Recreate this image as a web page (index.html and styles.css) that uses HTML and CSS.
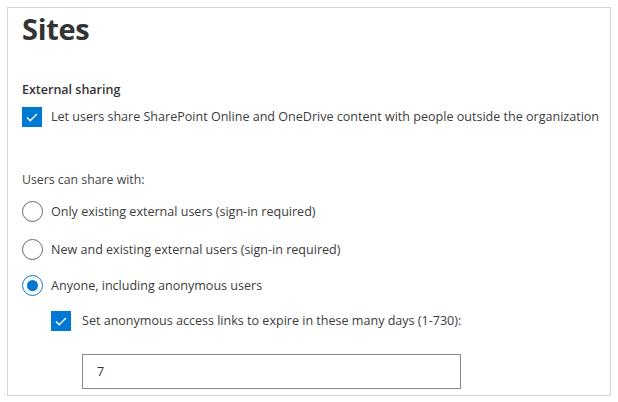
FILE: index.html
```html
<!DOCTYPE html>
<html>
<head>
<meta charset="utf-8">
<link rel="stylesheet" href="styles.css">
</head>
<body>
<div class="panel">
  <h1 class="title">Sites</h1>
  <div class="section-label">External sharing</div>
  <label class="check-row">
    <span class="checkbox"><svg viewBox="0 0 20 20" width="20" height="20"><path d="M5 10.5l3.2 3.2L15 7" fill="none" stroke="#fff" stroke-width="1.4"/></svg></span>
    <span class="text">Let users share SharePoint Online and OneDrive content with people outside the organization</span>
  </label>
  <div class="group-label">Users can share with:</div>
  <div class="radio-row first"><span class="radio"></span><span class="text">Only existing external users (sign-in required)</span></div>
  <div class="radio-row second"><span class="radio"></span><span class="text">New and existing external users (sign-in required)</span></div>
  <div class="radio-row third"><span class="radio on"></span><span class="text">Anyone, including anonymous users</span></div>
  <div class="sub">
    <label class="check-row">
      <span class="checkbox"><svg viewBox="0 0 20 20" width="20" height="20"><path d="M5 10.5l3.2 3.2L15 7" fill="none" stroke="#fff" stroke-width="1.4"/></svg></span>
      <span class="text">Set anonymous access links to expire in these many days (1-730):</span>
    </label>
    <div class="input">7</div>
  </div>
</div>
</body>
</html>
```
FILE: styles.css
```css
html, body { margin: 0; padding: 0; background: #fff; }
body { font-family: "Open Sans", "Noto Sans", sans-serif; color: #333; overflow: hidden; }
.panel {
  margin: 7px 0 0 7px;
  width: 604px;
  height: 389px;
  border: 1px solid #d6d6d6;
  box-sizing: border-box;
  padding: 3px 0 0 14px;
}
.title { margin: 0; font-size: 29px; font-weight: 700; line-height: 36px; color: #333; letter-spacing: -0.3px; }
.section-label { margin-top: 34px; font-size: 12.5px; font-weight: 600; line-height: 18px; color: #333; }
.check-row { display: flex; align-items: center; gap: 9px; margin-top: 8px; height: 20px; }
.checkbox { width: 20px; height: 20px; background: #0078d4; display: flex; flex: none; }
.text { font-size: 12.55px; color: #3c3c3c; line-height: 20px; white-space: nowrap; }
.group-label { margin-top: 44px; font-size: 12.3px; color: #444; line-height: 18px; }
.radio-row { display: flex; align-items: center; gap: 8px; height: 21px; }
.radio-row.first { margin-top: 12px; }
.radio-row.second { margin-top: 17px; }
.radio-row.third { margin-top: 15px; }
.radio { width: 21px; height: 21px; border: 1px solid #666; border-radius: 50%; box-sizing: border-box; flex: none; display: flex; align-items: center; justify-content: center; }
.radio.on { border-color: #0078d4; }
.radio.on::after { content: ""; width: 11px; height: 11px; border-radius: 50%; background: #0078d4; }
.sub { padding-left: 29px; margin-top: 15px; }
.sub .check-row { margin-top: 0; gap: 11px; }
.input { margin: 23px 0 0 31px; width: 379px; height: 35px; border: 1px solid #8a8a8a; box-sizing: border-box; font-size: 12.5px; color: #333; line-height: 33px; padding-left: 14px; }
```
